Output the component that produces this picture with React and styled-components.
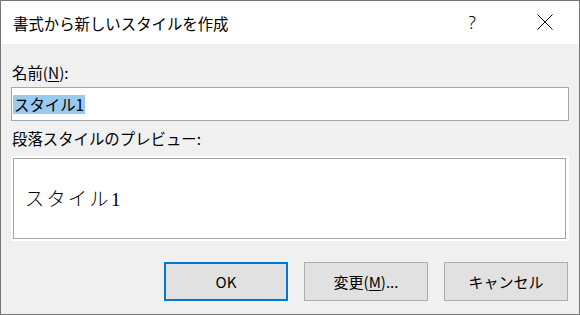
import React from "react";
import styled, { createGlobalStyle } from "styled-components";

const Global = createGlobalStyle`
  html, body { margin: 0; padding: 0; background: #ffffff; }
  * { box-sizing: border-box; }
`;

const UI = `"Noto Sans CJK JP", "Noto Sans", sans-serif`;

const Window = styled.div`
  width: 580px;
  height: 315px;
  border: 1px solid #767676;
  display: flex;
  flex-direction: column;
  background: #f0f0f0;
  font-family: ${UI};
  color: #000;
`;

const TitleBar = styled.div`
  height: 43px;
  background: #ffffff;
  display: flex;
  align-items: center;
  padding: 0 11px 0 12px;
`;

const Title = styled.div`
  flex: 1;
  font-size: 15.4px;
  line-height: 20px;
`;

const TitleButton = styled.div`
  width: 46px;
  height: 43px;
  display: flex;
  align-items: center;
  justify-content: center;
  font-family: "Noto Sans", sans-serif;
  font-size: 18px;
  font-weight: 300;
  padding-bottom: 1px;
  margin-right: ${(p) => p.$gap || 0}px;
`;

const Body = styled.div`
  flex: 1;
  display: flex;
  flex-direction: column;
  padding: 18px 10px 13px 10px;
`;

const Label = styled.div`
  font-size: 15.4px;
  line-height: 20px;
  height: 20px;
  padding-left: 1px;
  margin-bottom: ${(p) => p.$mb}px;
`;

const U = styled.span`
  text-decoration: underline;
  text-underline-offset: 2px;
`;

const TextBox = styled.div`
  height: 34px;
  background: #ffffff;
  border: 1px solid #a6a6a6;
  display: flex;
  align-items: center;
  padding-left: 1px;
  margin-bottom: 7px;
`;

const Selected = styled.span`
  display: inline-block;
  background: #99c9ef;
  font-size: 15.4px;
  line-height: 19px;
  height: 19px;
  padding: 0 1px;
`;

const PreviewFrame = styled.div`
  height: 85px;
  background: #ffffff;
  padding: 2px 3px 2px 2px;
  margin-bottom: 21px;
`;

const PreviewInner = styled.div`
  height: 100%;
  border: 1px solid #a6a6a6;
  display: flex;
  align-items: center;
  padding: 2px 0 0 11px;
`;

const PreviewText = styled.span`
  font-family: "Liberation Serif", "Noto Sans CJK JP", serif;
  font-weight: 300;
  font-size: 19px;
  letter-spacing: 2.5px;
  line-height: 24px;
`;

const ButtonRow = styled.div`
  display: flex;
  justify-content: flex-end;
  gap: 16px;
  padding-right: 1px;
`;

const Button = styled.div`
  width: 124px;
  height: 39px;
  background: #e1e1e1;
  border: ${(p) => (p.$default ? "2px solid #0078d7" : "1px solid #adadad")};
  display: flex;
  align-items: center;
  justify-content: center;
  font-size: 15px;
  line-height: 20px;
`;

const CloseIcon = () => (
  <svg width="16" height="16" viewBox="0 0 16 16">
    <path d="M0.5 0.5 L15.5 15.5 M15.5 0.5 L0.5 15.5" stroke="#000" strokeWidth="1" fill="none" />
  </svg>
);

export default function App() {
  return (
    <>
      <Global />
      <Window>
        <TitleBar>
          <Title>書式から新しいスタイルを作成</Title>
          <TitleButton $gap={27}>?</TitleButton>
          <TitleButton>
            <CloseIcon />
          </TitleButton>
        </TitleBar>
        <Body>
          <Label $mb={5}>
            名前(<U>N</U>):
          </Label>
          <TextBox>
            <Selected>スタイル1</Selected>
          </TextBox>
          <Label $mb={8}>段落スタイルのプレビュー:</Label>
          <PreviewFrame>
            <PreviewInner>
              <PreviewText>スタイル1</PreviewText>
            </PreviewInner>
          </PreviewFrame>
          <ButtonRow>
            <Button $default>OK</Button>
            <Button>
              変更(<U>M</U>)...
            </Button>
            <Button>キャンセル</Button>
          </ButtonRow>
        </Body>
      </Window>
    </>
  );
}
